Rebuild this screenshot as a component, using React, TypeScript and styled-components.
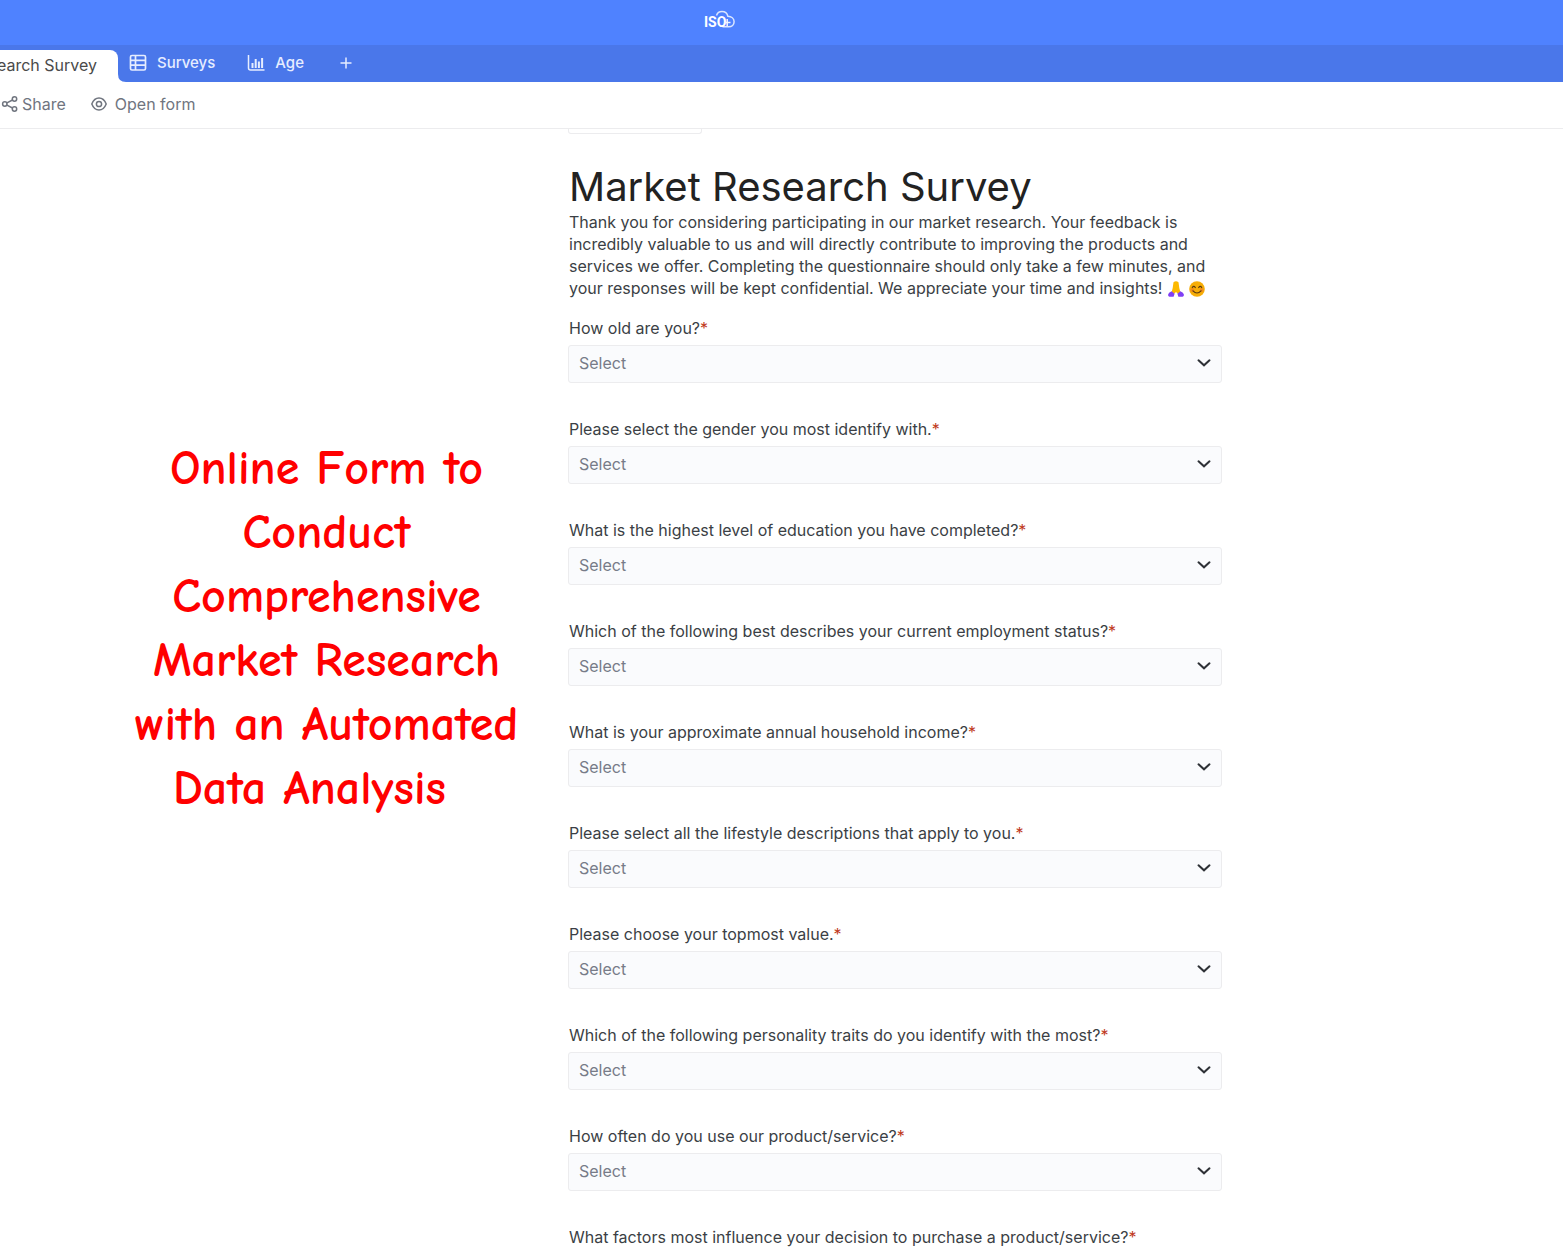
import React from "react";
import styled, { createGlobalStyle } from "styled-components";

const GlobalStyle = createGlobalStyle`
  *, *::before, *::after { box-sizing: border-box; }
  body {
    margin: 0;
    background: #ffffff;
    font-family: Inter, "Liberation Sans", sans-serif;
    font-size: 16px;
    line-height: 22px;
    color: #3b3f45;
  }
`;

const Page = styled.div`
  display: flex;
  flex-direction: column;
  height: 100vh;
`;

const Header = styled.header`
  flex: none;
  display: flex;
  height: 45px;
  padding: 8px 0 0 704px;
  background: #4f82ff;
`;

const TabBar = styled.nav`
  flex: none;
  display: flex;
  align-items: flex-start;
  height: 37px;
  background: #4a77ea;
`;

const Tab = styled.button`
  display: flex;
  align-items: center;
  gap: 10px;
  height: 36px;
  margin: 0;
  padding: 0 16px;
  border: 0;
  background: none;
  color: #e6edff;
  font: 500 15px/22px Inter, "Liberation Sans", sans-serif;
  font-optical-sizing: none;
  white-space: nowrap;
`;

const AddTab = styled(Tab)`
  padding: 0 20px;
`;

const ActiveTab = styled(Tab)`
  align-self: flex-end;
  justify-content: flex-end;
  width: 118px;
  height: 32px;
  padding: 0 21px 2px 0;
  border-radius: 0 8px 0 0;
  overflow: hidden;
  background: #ffffff;
  color: #4a4a4a;
  font-size: 16px;
  font-weight: 400;
  font-optical-sizing: auto;
`;

const TabCurve = styled.svg`
  align-self: flex-end;
  width: 8px;
  height: 8px;
  margin-right: -13px;
`;

const Toolbar = styled.div`
  flex: none;
  display: flex;
  align-items: center;
  gap: 25px;
  height: 47px;
  padding: 0 0 2px 1px;
  border-bottom: 1px solid #ececee;
`;

const Tool = styled.button<{ $gap: number }>`
  display: flex;
  align-items: center;
  gap: ${(p) => p.$gap}px;
  margin: 0;
  padding: 0;
  border: 0;
  background: none;
  color: #70757f;
  font: 400 16px/22px Inter, "Liberation Sans", sans-serif;
`;

const Main = styled.main`
  flex: 1;
  min-height: 0;
  display: grid;
  grid-template-columns: minmax(0, 568px) minmax(0, 654px) 1fr;
  align-items: start;
  overflow-y: auto;
  scrollbar-width: none;
`;

const Caption = styled.p`
  margin: 308px 0 0;
  padding-left: 85px;
  color: #ff0000;
  font-family: "Comic Sans MS", "Comic Neue", Lato, sans-serif;
  font-size: 48px;
  font-weight: 700;
  line-height: 64px;
  text-align: center;
  white-space: pre-line;
`;

const Form = styled.form`
  display: flex;
  flex-direction: column;
`;

const CoverSlot = styled.div`
  width: 134px;
  height: 5px;
  border: 1px solid #ececee;
  border-top: 0;
  border-radius: 0 0 3px 3px;
`;

const Title = styled.h1`
  margin: 29px 0 0 1px;
  color: #222222;
  font-size: 40px;
  line-height: 48px;
  font-weight: 400;
  font-optical-sizing: none;
`;

const Intro = styled.p`
  margin: 0 0 18px 1px;
  white-space: pre-line;
`;

const Emoji = styled.svg`
  width: 18px;
  height: 18px;
  margin-right: 3px;
  vertical-align: -4px;
`;

const Field = styled.div`
  display: flex;
  flex-direction: column;
  height: 101px;
  flex: none;
`;

const Label = styled.label`
  margin: 0 0 6px 1px;
`;

const Required = styled.span`
  color: #c0391b;
`;

const SelectBox = styled.div`
  display: grid;
  align-items: center;

  > * { grid-area: 1 / 1; }
`;

const Select = styled.select`
  appearance: none;
  width: 100%;
  height: 38px;
  margin: 0;
  padding: 0 40px 2px 10px;
  border: 1px solid #ececee;
  border-radius: 3px;
  background: #fafbfd;
  color: #777b88;
  font: 400 16px/22px Inter, "Liberation Sans", sans-serif;
`;

const Chevron = styled.svg`
  justify-self: end;
  width: 14px;
  height: 8px;
  margin: 0 11px 2px 0;
  pointer-events: none;
`;

const Logo = () => (
  <svg width="32" height="22" viewBox="0 0 32 22" role="img" aria-label="ISO+">
    <path
      d="M12.500 7.500C13.300 5 15.500 3.600 18 3.600c3 0 5.200 1.900 5.900 4.700 3.400.2 6.200 2.300 6.200 5.500 0 3-2.300 5-5.300 5H18.500"
      fill="none" stroke="#dbe6ff" strokeWidth="1.500"
    />
    <text x="0" y="19" fill="#ffffff" fontFamily="'Liberation Sans Narrow', Roboto, sans-serif" fontSize="14" fontWeight="700">ISO</text>
    <path d="M20 14.500h6.500M23.200 11v7" stroke="#f0f5ff" strokeWidth="1.500" />
  </svg>
);

const TableIcon = () => (
  <svg width="18" height="18" viewBox="0 0 18 18" fill="none" stroke="currentColor" strokeWidth="1.7" aria-hidden="true">
    <rect x="1.500" y="1.500" width="15" height="14.500" rx="1.500" />
    <path d="M6.500 1.500v14.500M1.500 6.300h15M1.500 11.200h15" />
  </svg>
);

const ChartIcon = () => (
  <svg width="18" height="18" viewBox="0 0 18 18" fill="none" stroke="currentColor" aria-hidden="true">
    <path d="M1.500 1v13q0 2 2 2H17.500" strokeWidth="1.500" />
    <path d="M5.500 9v5M8.700 5v9M11.900 7.500v6.500M15.100 4v10" strokeWidth="2" />
  </svg>
);

const PlusIcon = () => (
  <svg width="12" height="12" viewBox="0 0 12 12" stroke="currentColor" strokeWidth="1.500" aria-hidden="true">
    <path d="M6 .5v11M.5 6h11" />
  </svg>
);

const ShareIcon = () => (
  <svg width="17" height="18" viewBox="0 0 17 18" fill="none" stroke="currentColor" strokeWidth="1.500" aria-hidden="true">
    <circle cx="3.800" cy="9" r="2.200" />
    <circle cx="13.500" cy="4" r="2.200" />
    <circle cx="13.500" cy="14" r="2.200" />
    <path d="M5.900 7.900l5.600-2.900M5.900 10.100l5.600 2.900" />
  </svg>
);

const EyeIcon = () => (
  <svg width="16" height="14" viewBox="0 0 16 14" fill="none" stroke="currentColor" strokeWidth="1.500" aria-hidden="true">
    <path d="M.8 7C2.300 3.200 4.800 1 8 1s5.700 2.200 7.200 6c-1.500 3.800-4 6-7.200 6S2.300 10.800.8 7z" />
    <circle cx="8" cy="7" r="2.600" />
  </svg>
);

const PrayEmoji = () => (
  <Emoji viewBox="0 0 18 18" role="img" aria-label="folded hands">
    <path d="M6.500 2.300Q9 .3 11.500 2.300L12.300 8l1.100 4.200-2.300 1.800L9 12l-2.100 2-2.300-1.800L5.700 8z" fill="#fcb900" />
    <path d="M4.600 11.300l3 2.400-1 3.100H2.400Q.8 16.600 1.100 14.500q.3-1.900 3.500-3.200zM13.400 11.300l-3 2.400 1 3.100h4.200q1.600-.2 1.300-2.300-.3-1.900-3.500-3.200z" fill="#8040f5" />
  </Emoji>
);

const SmileEmoji = () => (
  <Emoji viewBox="0 0 18 18" role="img" aria-label="smiling face">
    <circle cx="9" cy="9" r="7.800" fill="#f6ad07" />
    <circle cx="4.400" cy="10" r="2" fill="#f28a1b" />
    <circle cx="13.600" cy="10" r="2" fill="#f28a1b" />
    <path d="M4.300 7.500Q5.800 5.200 7.300 7.500M10.700 7.500q1.500-2.300 3 0M5 10.800q4 4.400 8 0" fill="none" stroke="#5a3a10" strokeWidth="1.200" strokeLinecap="round" />
  </Emoji>
);

const questions = [
  "How old are you?",
  "Please select the gender you most identify with.",
  "What is the highest level of education you have completed?",
  "Which of the following best describes your current employment status?",
  "What is your approximate annual household income?",
  "Please select all the lifestyle descriptions that apply to you.",
  "Please choose your topmost value.",
  "Which of the following personality traits do you identify with the most?",
  "How often do you use our product/service?",
  "What factors most influence your decision to purchase a product/service?",
];

const Question = ({ id, text }: { id: string; text: string }) => (
  <Field>
    <Label htmlFor={id}>
      {text}
      <Required>*</Required>
    </Label>
    <SelectBox>
      <Select id={id} defaultValue="">
        <option value="">Select</option>
      </Select>
      <Chevron viewBox="0 0 14 8" aria-hidden="true">
        <path d="M1.500 1.300L7 6.300l5.500-5" fill="none" stroke="#2e3136" strokeWidth="2" strokeLinecap="round" />
      </Chevron>
    </SelectBox>
  </Field>
);

export default function App() {
  return (
    <Page>
      <GlobalStyle />
      <Header>
        <Logo />
      </Header>
      <TabBar>
        <ActiveTab type="button">Research Survey</ActiveTab>
        <TabCurve viewBox="0 0 8 8" aria-hidden="true">
          <path d="M0 0Q0 8 8 8H0z" fill="#ffffff" />
        </TabCurve>
        <Tab type="button"><TableIcon />Surveys</Tab>
        <Tab type="button"><ChartIcon />Age</Tab>
        <AddTab type="button" aria-label="Add tab"><PlusIcon /></AddTab>
      </TabBar>
      <Toolbar>
        <Tool type="button" $gap={4}><ShareIcon />Share</Tool>
        <Tool type="button" $gap={8}><EyeIcon />Open form</Tool>
      </Toolbar>
      <Main>
        <Caption>
          {"Online Form to\nConduct\nComprehensive\nMarket Research\nwith an Automated\nData Analysis\u00a0\u00a0"}
        </Caption>
        <Form>
          <CoverSlot />
          <Title>Market Research Survey</Title>
          <Intro>
            {"Thank you for considering participating in our market research. Your feedback is\nincredibly valuable to us and will directly contribute to improving the products and\nservices we offer. Completing the questionnaire should only take a few minutes, and\nyour responses will be kept confidential. We appreciate your time and insights! "}
            <PrayEmoji />
            <SmileEmoji />
          </Intro>
          {questions.map((text, i) => (
            <Question key={text} id={`question-${i + 1}`} text={text} />
          ))}
        </Form>
      </Main>
    </Page>
  );
}
